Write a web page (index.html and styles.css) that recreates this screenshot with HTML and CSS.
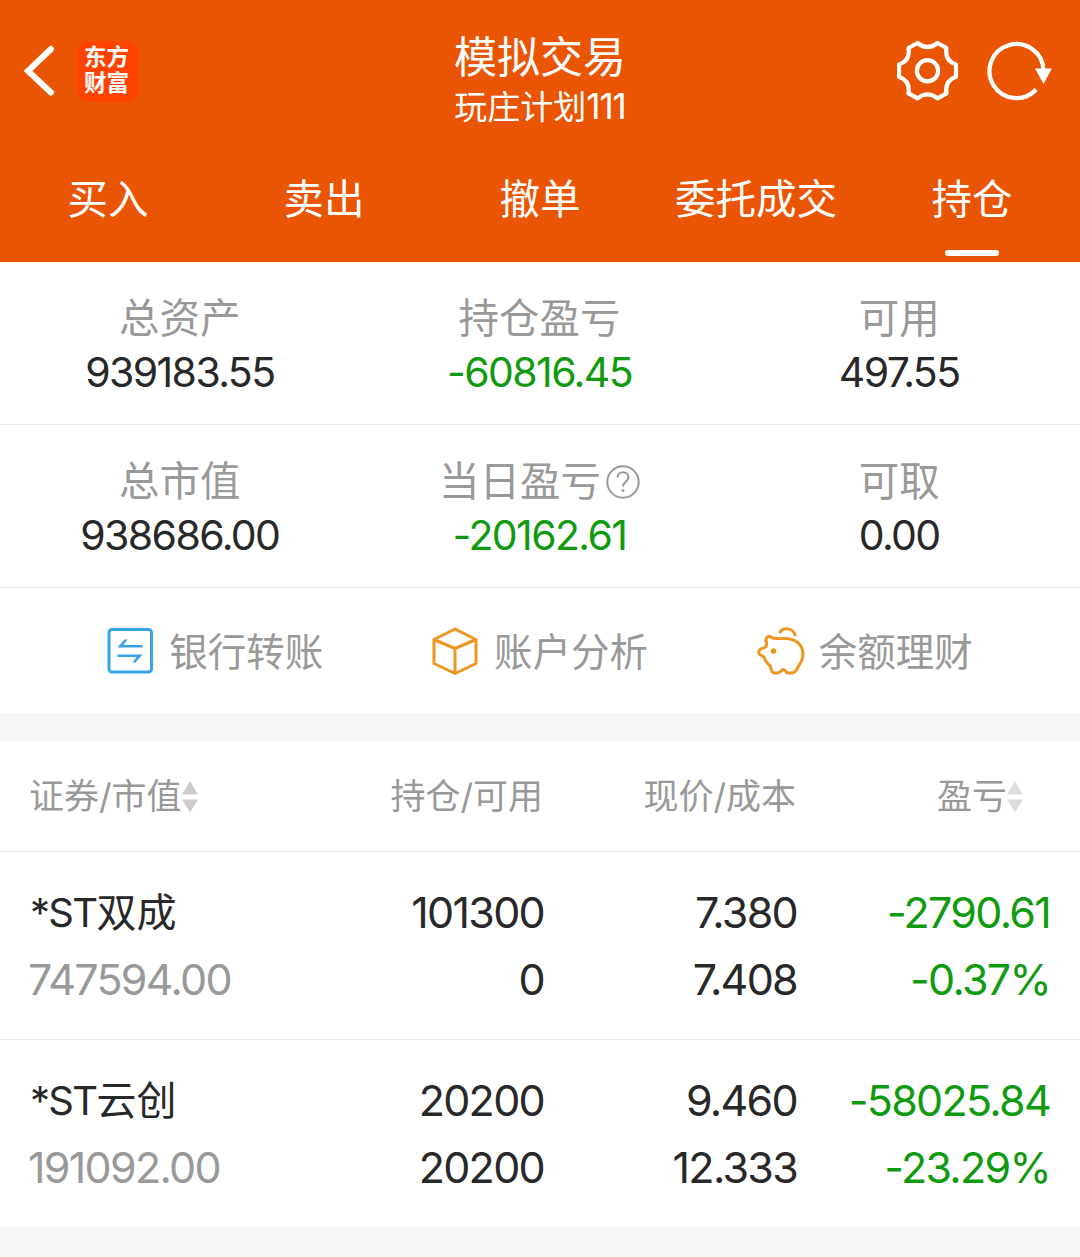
FILE: index.html
```html
<!DOCTYPE html>
<html lang="zh-CN">
  <head>
    <meta charset="UTF-8" />
    <meta name="viewport" content="width=device-width, initial-scale=1.0" />
    <title>模拟交易</title>
    <link rel="stylesheet" href="styles.css">
  </head>
  <body>
    <header>
      <div class="barra">
        <div class="izquierda">
          <svg class="volver" width="32" height="52" viewBox="0 0 32 52"><path d="M28 4L5 26L28 47.500" /></svg>
          <div class="logo"><span>东方</span><span>财富</span></div>
        </div>
        <div class="titulo">
          <h1>模拟交易</h1>
          <p>玩庄计划<span>111</span></p>
        </div>
        <div class="derecha">
          <svg width="62" height="62" viewBox="0 0 62 62">
            <path d="M20.500 3Q30.500 11 40.500 3L49.500 8Q47.500 21 59 24.500V36.800Q47.500 41 49.500 53.300L40.500 58.400Q30.500 50.400 20.500 58.400L11.500 53.300Q13.500 41 2 36.800V24.500Q13.500 21 11.500 8Z" />
            <circle cx="30.500" cy="30.700" r="10.600" />
          </svg>
          <svg width="66" height="62" viewBox="0 0 66 62">
            <path d="M50.200 49.500A27 27 0 1 1 57.500 30" />
            <path class="relleno" d="M49 28.500H66L57.500 44Z" />
          </svg>
        </div>
      </div>
      <nav>
        <a>买入</a>
        <a>卖出</a>
        <a>撤单</a>
        <a>委托成交</a>
        <a class="activo">持仓</a>
      </nav>
    </header>
    <main>
      <section class="resumen">
        <div class="dato"><span>总资产</span><b>939183.55</b></div>
        <div class="dato"><span>持仓盈亏</span><b class="verde">-60816.45</b></div>
        <div class="dato"><span>可用</span><b>497.55</b></div>
      </section>
      <section class="resumen">
        <div class="dato"><span>总市值</span><b>938686.00</b></div>
        <div class="dato">
          <span>当日盈亏<svg class="ayuda" width="34" height="34" viewBox="0 0 34 34">
            <circle cx="17" cy="17" r="15.700" />
            <path d="M11.500 12.500C11.500 5.500 22.500 5.500 22.500 12.500C22.500 16.500 17 16.500 17 21.500" />
            <circle class="punto" cx="17" cy="25.500" r="1.500" />
          </svg></span>
          <b class="verde">-20162.61</b>
        </div>
        <div class="dato"><span>可取</span><b>0.00</b></div>
      </section>
      <section class="accesos">
        <a>
          <svg class="azul" width="46" height="46" viewBox="0 0 46 46">
            <rect x="2" y="1.500" width="42.500" height="42.500" rx="3" />
            <path class="flecha" d="M10.500 19.500L17.500 11.500H20.500L16.500 17H35.500V19.500ZM35.500 26.500L28.500 34.500H25.500L29.500 29H10.500V26.500Z" />
          </svg>
          <span>银行转账</span>
        </a>
        <a>
          <svg width="46" height="48" viewBox="0 0 46 48">
            <path d="M23 2L44 12.500V36.500L23 46.500L2 36.500V12.500ZM2 12.500L23 21.500L44 12.500M23 21.500V46.500" />
          </svg>
          <span>账户分析</span>
        </a>
        <a class="cerdo">
          <svg width="49" height="48" viewBox="0 0 49 48">
            <path d="M10 10.500Q11 9 13 9.500Q16 11.500 19 11.500H28C39 11.500 46 18 46 27C46 35 41 39 40 42Q38 46 34 46H30Q28 42 25 43Q23 46 20 46H17Q14 45 13.500 39Q9 36 7 30L2.500 27.500Q1 25 3 22.500L8.500 20Q10 18 9.500 15Q8 13 10 10.500Z" />
            <path d="M22.500 6C26 0 36 0 38.500 9" />
            <circle class="punto" cx="16.500" cy="24" r="2.800" />
          </svg>
          <span>余额理财</span>
        </a>
      </section>
      <section class="tabla">
        <div class="fila cabecera">
          <span>证券/市值<svg width="16" height="32" viewBox="0 0 16 32"><path d="M0 13.500L8 0L16 13.500ZM0 18.500L8 31.500L16 18.500Z" /></svg></span>
          <span>持仓/可用</span>
          <span>现价/成本</span>
          <span class="orden">盈亏<svg class="claro" width="16" height="32" viewBox="0 0 16 32"><path d="M0 13.500L8 0L16 13.500ZM0 18.500L8 31.500L16 18.500Z" /></svg></span>
        </div>
        <div class="fila">
          <div><p class="nombre"><span>*ST</span>双成</p><p class="gris">747594.00</p></div>
          <div><p>101300</p><p>0</p></div>
          <div><p>7.380</p><p>7.408</p></div>
          <div class="verde"><p>-2790.61</p><p>-0.37%</p></div>
        </div>
        <div class="fila">
          <div><p class="nombre"><span>*ST</span>云创</p><p class="gris">191092.00</p></div>
          <div><p>20200</p><p>20200</p></div>
          <div><p>9.460</p><p>12.333</p></div>
          <div class="verde"><p>-58025.84</p><p>-23.29%</p></div>
        </div>
      </section>
    </main>
  </body>
</html>
```
FILE: styles.css
```css
*{
    box-sizing: border-box;
    margin: 0;
    padding: 0;
}
body{
    background-color: #f6f7f9;
    color: #282828;
    font-family: Inter, "Noto Sans CJK SC", sans-serif;
}
svg{
    fill: none;
    flex-shrink: 0;
}
header{
    height: 262px;
    background-color: #ea5504;
    color: #fff;
}
.barra{
    display: grid;
    grid-template-columns: 1fr 1fr 1fr;
    height: 142px;
}
.izquierda{
    display: flex;
    align-items: center;
    gap: 22px;
    padding-left: 23px;
}
.volver{
    stroke: #fff;
    stroke-width: 6;
    stroke-linecap: round;
}
.logo{
    display: flex;
    flex-direction: column;
    justify-content: center;
    align-items: center;
    width: 61px;
    height: 61px;
    padding-right: 2px;
    padding-bottom: 2px;
    border-radius: 12px;
    background-color: #ff4200;
    font-size: 22.5px;
    font-weight: 700;
    line-height: 26px;
}
.titulo{
    padding-top: 30px;
    text-align: center;
}
.titulo h1{
    font-size: 43px;
    font-weight: 400;
    line-height: 54px;
}
.titulo p{
    font-size: 33px;
    line-height: 44px;
}
.titulo span{
    font-size: 35px;
    letter-spacing: -1px;
}
.derecha{
    display: flex;
    justify-content: flex-end;
    align-items: center;
    gap: 27px;
    padding-right: 28px;
}
.derecha svg{
    stroke: #fff;
    stroke-width: 4.2;
    stroke-linejoin: round;
}
.derecha .relleno{
    fill: #fff;
    stroke: none;
}
nav{
    display: flex;
    height: 120px;
}
nav a{
    flex: 1;
    display: flex;
    flex-direction: column;
    align-items: center;
    padding-top: 28px;
    font-size: 40.5px;
    line-height: 60px;
    white-space: nowrap;
}
.activo::after{
    content: "";
    width: 54px;
    height: 6px;
    margin-top: 20px;
    border-radius: 3px;
    background-color: #fff;
}
main{
    background-color: #fff;
}
.resumen{
    display: grid;
    grid-template-columns: 1fr 1fr 1fr;
    height: 163px;
    padding-top: 30px;
    padding-right: 1px;
    border-bottom: 1px solid #ececec;
}
.dato{
    display: flex;
    flex-direction: column;
    align-items: center;
}
.dato span{
    display: flex;
    align-items: center;
    color: #999;
    font-size: 40.5px;
    line-height: 54px;
}
.dato b{
    font-size: 41px;
    font-weight: 400;
    line-height: 52px;
    letter-spacing: -1.6px;
}
.ayuda{
    margin-left: 5px;
    stroke: #999;
    stroke-width: 2;
}
.ayuda .punto{
    fill: #999;
    stroke: none;
}
.dato .verde, .verde{
    color: #109a10;
}
.accesos{
    display: grid;
    grid-template-columns: 1fr 1fr 1fr;
    height: 125px;
    padding: 0 53px;
}
.accesos a{
    display: flex;
    justify-content: center;
    align-items: center;
    gap: 16px;
    color: #999;
    font-size: 38.5px;
}
.accesos span{
    padding-bottom: 3px;
}
.accesos svg{
    stroke: #ee9620;
    stroke-width: 3;
    stroke-linejoin: round;
}
.accesos .azul{
    stroke: #38a4e8;
}
.azul .flecha{
    fill: #38a4e8;
    stroke: none;
}
.accesos .cerdo{
    gap: 13px;
}
.cerdo .punto{
    fill: #ee9620;
    stroke: none;
}
.tabla{
    border-top: 28px solid #f6f7f9;
}
.fila{
    display: grid;
    grid-template-columns: 254px 260px 253px 253px;
    height: 188px;
    padding: 27px 30px 0;
    border-bottom: 1px solid #ececec;
    text-align: right;
    font-size: 43px;
    line-height: 67px;
    letter-spacing: -1.7px;
}
.fila:last-child{
    height: 187px;
    border-bottom: none;
}
.fila > :first-child{
    text-align: left;
}
.cabecera{
    height: 111px;
    padding-top: 0;
    padding-left: 29px;
    color: #999;
    font-size: 35px;
    line-height: 110px;
    letter-spacing: 0;
}
.cabecera svg{
    fill: #ccc;
    vertical-align: -4px;
}
.cabecera .claro{
    fill: #ddd;
}
.cabecera .orden{
    padding-right: 26px;
}
.fila .nombre{
    font-size: 40px;
    letter-spacing: 0;
}
.nombre span{
    letter-spacing: -1.7px;
}
.gris{
    margin-left: -2px;
    color: #999;
}
```
